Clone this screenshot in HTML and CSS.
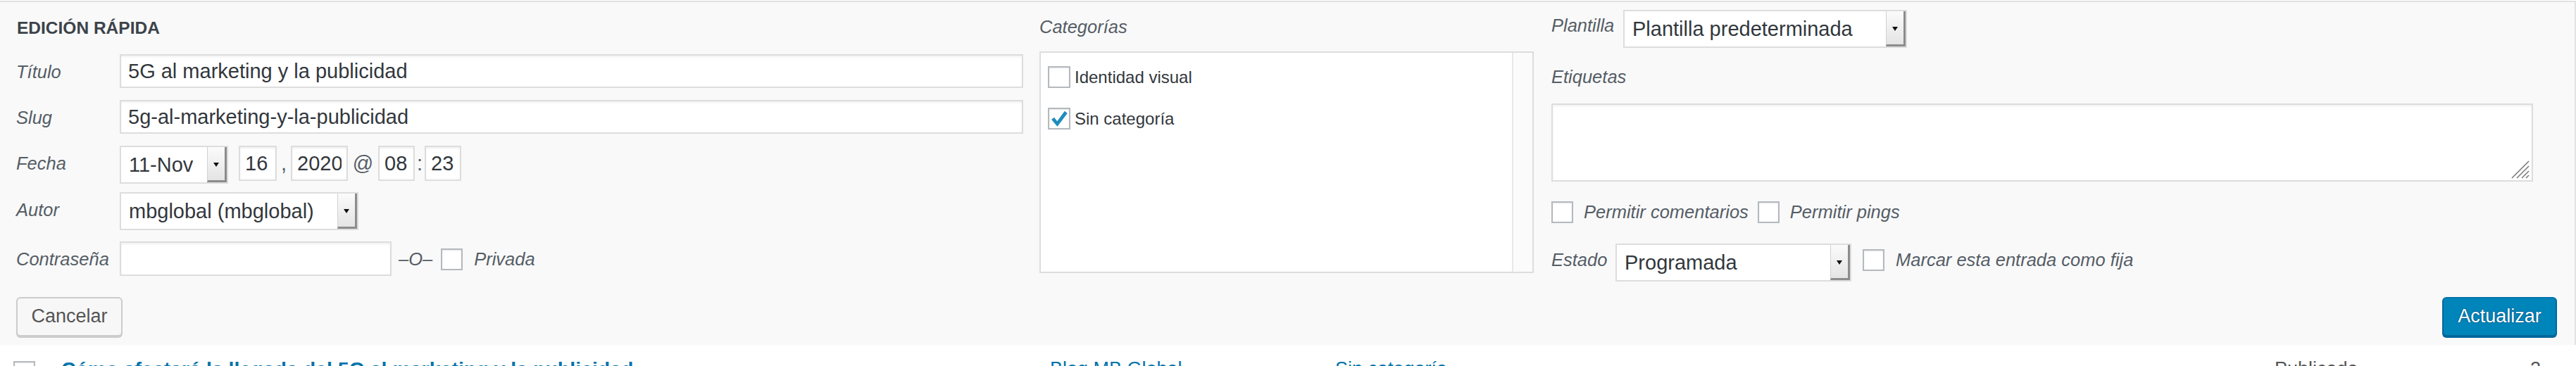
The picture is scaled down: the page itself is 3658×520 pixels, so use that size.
FILE: index.html
```html
<!DOCTYPE html>
<html lang="es">
<head>
<meta charset="utf-8">
<title>Edición rápida</title>
<link rel="stylesheet" href="styles.css">
</head>
<body>
<div class="panel">
  <div class="cols">
    <div class="col col-left">
      <h4 class="legend">EDICIÓN RÁPIDA</h4>
      <div class="row r-title">
        <span class="lbl">Título</span>
        <input class="txt wide" type="text" value="5G al marketing y la publicidad">
      </div>
      <div class="row r-slug">
        <span class="lbl">Slug</span>
        <input class="txt wide" type="text" value="5g-al-marketing-y-la-publicidad">
      </div>
      <div class="row r-date">
        <span class="lbl">Fecha</span>
        <div class="sel sel-month"><span class="sel-text">11-Nov</span><span class="sel-arrow"></span></div>
        <input class="txt num day" type="text" value="16">
        <span class="sep comma">,</span>
        <input class="txt num year" type="text" value="2020">
        <span class="sep at">@</span>
        <input class="txt num hh" type="text" value="08">
        <span class="sep colon">:</span>
        <input class="txt num mn" type="text" value="23">
      </div>
      <div class="row r-author">
        <span class="lbl">Autor</span>
        <div class="sel sel-author"><span class="sel-text">mbglobal (mbglobal)</span><span class="sel-arrow"></span></div>
      </div>
      <div class="row r-pass">
        <span class="lbl">Contraseña</span>
        <input class="txt pass" type="text" value="">
        <span class="lbl or">–O–</span>
        <span class="cb cb-priv"></span>
        <span class="lbl priv">Privada</span>
      </div>
    </div>

    <div class="col col-mid">
      <span class="lbl cat-title">Categorías</span>
      <div class="catbox">
        <div class="catlist">
          <div class="catitem"><span class="cb"></span><span>Identidad visual</span></div>
          <div class="catitem"><span class="cb"><svg class="check" viewBox="0 0 20 20" width="28" height="28"><path d="M2.2 10.6 L5 8.4 L8 12.4 L15.6 2 L18.4 4.2 L8.2 17.6 Z" fill="#1e8cbe"/></svg></span><span>Sin categoría</span></div>
        </div>
        <div class="track"></div>
      </div>
    </div>

    <div class="col col-right">
      <div class="row r-tpl">
        <span class="lbl tpl-lbl">Plantilla</span>
        <div class="sel sel-tpl"><span class="sel-text">Plantilla predeterminada</span><span class="sel-arrow"></span></div>
      </div>
      <span class="lbl tags-lbl">Etiquetas</span>
      <div class="tags">
        <svg class="grip" viewBox="0 0 26 26" width="26" height="26"><g stroke="#7a7a7a" stroke-width="1.6"><line x1="1" y1="25" x2="25" y2="1"/><line x1="8" y1="25" x2="25" y2="8"/><line x1="15" y1="25" x2="25" y2="15"/><line x1="21" y1="25" x2="25" y2="21"/></g></svg>
      </div>
      <div class="row r-checks">
        <span class="cb"></span>
        <span class="lbl chk-lbl">Permitir comentarios</span>
        <span class="cb cb-pings"></span>
        <span class="lbl chk-lbl">Permitir pings</span>
      </div>
      <div class="row r-status">
        <span class="lbl status-lbl">Estado</span>
        <div class="sel sel-status"><span class="sel-text">Programada</span><span class="sel-arrow"></span></div>
        <span class="cb cb-sticky"></span>
        <span class="lbl sticky-lbl">Marcar esta entrada como fija</span>
      </div>
    </div>
  </div>

  <div class="submit">
    <span class="btn btn-cancel">Cancelar</span>
    <span class="btn btn-primary">Actualizar</span>
  </div>
</div>

<div class="next">
  <span class="cb next-cb"></span>
  <span class="next-title">Cómo afectará la llegada del 5G al marketing y la publicidad</span>
  <span class="next-link">Blog MB Global</span>
  <span class="next-link">Sin categoría</span>
  <span class="next-status">Publicada</span>
  <span class="next-status">2</span>
</div>
</body>
</html>
```

FILE: styles.css
```css
* { box-sizing: border-box; }
html, body { margin: 0; padding: 0; }
body {
  width: 3658px;
  height: 520px;
  overflow: hidden;
  padding-top: 1px;
  background: #fff;
  font-family: "Liberation Sans", Arial, sans-serif;
  color: #32373c;
}

.panel {
  background: #f9f9f9;
  border-top: 2px solid #e1e1e1;
  border-right: 2px solid #e3e3e3;
  padding: 0 25px 12px 23px;
}

.cols { display: flex; align-items: flex-start; }
.col-left { width: 1430px; margin-right: 23px; flex: none; }
.col-mid { width: 702px; margin-right: 25px; flex: none; }
.col-right { width: 1394px; flex: none; }

.legend {
  margin: 22px 0 0 1px;
  font-size: 24.5px;
  line-height: 30px;
  font-weight: 700;
  color: #3c434a;
}

.row { display: flex; align-items: flex-start; }

.lbl {
  font-style: italic;
  font-size: 25.5px;
  line-height: 30px;
  color: #555d66;
  white-space: nowrap;
}
.col-left .row > .lbl:first-child { width: 147px; flex: none; padding-top: 10px; }

.r-title { margin-top: 22px; }
.r-slug, .r-date { margin-top: 17px; }
.r-author { margin-top: 12px; }
.r-pass { margin-top: 16px; }

.txt {
  height: 48px;
  margin: 0;
  padding: 0 10px;
  border: 2px solid #dddddd;
  border-radius: 0;
  background: #fff;
  box-shadow: inset 0 2px 3px rgba(0, 0, 0, 0.06);
  font-family: "Liberation Sans", Arial, sans-serif;
  font-size: 29px;
  color: #32373c;
  outline: none;
}
.wide { width: 1283px; }
.num { height: 50px; padding: 0 7px; }
.day { width: 54px; margin-left: 15px; }
.year { width: 81px; }
.hh, .mn { width: 52px; }

.sep {
  font-size: 29px;
  line-height: 50px;
  color: #555d66;
  text-align: center;
  flex: none;
}
.comma { width: 20px; }
.at { width: 43px; }
.colon { width: 14px; }

.sel {
  display: flex;
  height: 54px;
  border: 2px solid #dddddd;
  background: #fff;
  flex: none;
}
.sel-text {
  flex: 1;
  padding-left: 11px;
  font-size: 29px;
  line-height: 50px;
  color: #32373c;
  white-space: nowrap;
  overflow: hidden;
}
.sel-arrow {
  flex: none;
  width: 28px;
  display: flex;
  align-items: center;
  justify-content: center;
  background: linear-gradient(#fbfbfb, #e4e4e4);
  border-left: 1px solid #d2d2d2;
  border-right: 3px solid #8c8c8c;
  border-bottom: 3px solid #8c8c8c;
}
.sel-arrow::after {
  content: "";
  display: block;
  margin-top: 2px;
  border-left: 4px solid transparent;
  border-right: 4px solid transparent;
  border-top: 6px solid #111;
}
.sel-month { width: 154px; }
.sel-author { width: 339px; }
.sel-tpl { width: 403px; }
.sel-status { width: 335px; }

.pass { width: 386px; height: 49px; }
.or { margin-left: 10px; padding-top: 10px; }
.cb-priv { margin: 10px 0 0 12px; }
.priv { margin-left: 16px; padding-top: 10px; }

.cb {
  width: 31px;
  height: 31px;
  flex: none;
  display: flex;
  align-items: center;
  justify-content: center;
  border: 2px solid #b4b9be;
  background: #fff;
  box-shadow: inset 0 1px 2px rgba(0, 0, 0, 0.1);
}
.check { flex: none; }

/* middle column */
.cat-title { display: block; margin-top: 20px; }
.catbox {
  margin-top: 20px;
  height: 315px;
  display: flex;
  border: 2px solid #dddddd;
  background: #fff;
}
.catlist {
  flex: 1;
  padding: 19px 10px;
  display: flex;
  flex-direction: column;
  gap: 28px;
}
.catitem {
  display: flex;
  align-items: center;
  gap: 6px;
  font-size: 24px;
  line-height: 31px;
  color: #32373c;
}
.catitem .cb { width: 32px; overflow: visible; }
.track {
  width: 29px;
  flex: none;
  border-left: 2px solid #e8e8e8;
  background: #fbfbfb;
}

/* right column */
.r-tpl { margin-top: 11px; }
.tpl-lbl { width: 102px; flex: none; padding-top: 7px; }
.tags-lbl { display: block; margin-top: 26px; }
.tags {
  position: relative;
  margin-top: 23px;
  height: 111px;
  border: 2px solid #dddddd;
  background: #fff;
  box-shadow: inset 0 2px 3px rgba(0, 0, 0, 0.06);
}
.grip { position: absolute; right: 3px; bottom: 2px; }

.r-checks { margin-top: 27px; height: 32px; align-items: center; }
.chk-lbl { margin-left: 15px; }
.cb-pings { margin-left: 13px; }

.r-status { margin-top: 29px; }
.status-lbl { width: 91px; flex: none; padding-top: 8px; }
.cb-sticky { margin: 8px 0 0 16px; }
.sticky-lbl { margin-left: 16px; padding-top: 8px; }

/* buttons */
.submit {
  display: flex;
  justify-content: space-between;
  margin-top: 22px;
}
.btn {
  height: 56px;
  border-radius: 6px;
  border: 2px solid;
  font-size: 27px;
  line-height: 50px;
  text-align: center;
}
.btn-cancel {
  width: 151px;
  color: #555;
  background: #f7f7f7;
  border-color: #cccccc;
  box-shadow: 0 2px 0 #cccccc;
}
.btn-primary {
  width: 163px;
  color: #fff;
  background: #0085ba;
  border-color: #0073aa #006799 #006799;
  box-shadow: 0 2px 0 #006799;
  text-shadow: 0 -1px 1px #006799, 1px 0 1px #006799, 0 1px 1px #006799, -1px 0 1px #006799;
}

/* next list row (clipped by the window bottom) */
.next {
  display: grid;
  grid-template-columns: 87px 1404px 405px 1334px 363px 1fr;
  padding-top: 19px;
  font-size: 27px;
  line-height: 30px;
  white-space: nowrap;
}
.next-cb { margin: 4px 0 0 19px; }
.next-title { font-weight: 700; font-size: 28.5px; color: #0073aa; }
.next-link { color: #0073aa; }
.next-status { color: #555; }
```
